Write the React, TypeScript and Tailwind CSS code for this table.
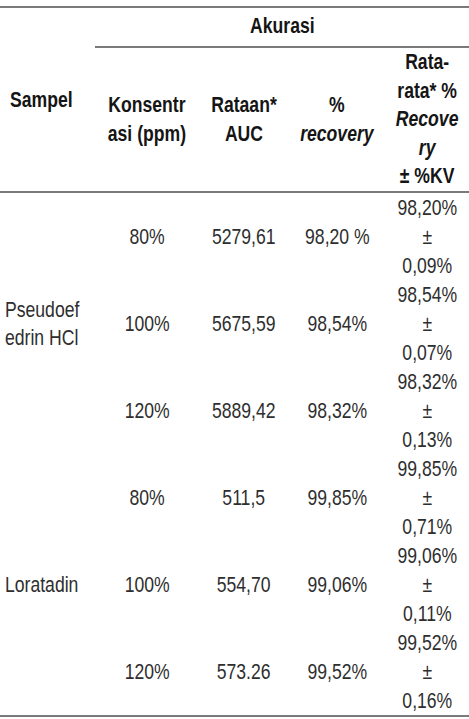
import React from "react";

const rows = [
  { c: "80%", a: "5279,61", r: "98,20 %", m: "98,20%", kv: "0,09%" },
  { c: "100%", a: "5675,59", r: "98,54%", m: "98,54%", kv: "0,07%" },
  { c: "120%", a: "5889,42", r: "98,32%", m: "98,32%", kv: "0,13%" },
  { c: "80%", a: "511,5", r: "99,85%", m: "99,85%", kv: "0,71%" },
  { c: "100%", a: "554,70", r: "99,06%", m: "99,06%", kv: "0,11%" },
  { c: "120%", a: "573.26", r: "99,52%", m: "99,52%", kv: "0,16%" },
];

const N = "inline-block scale-x-[0.8] whitespace-nowrap";

export default function App() {
  return (
    <div
      className="w-[469px] h-[719px] bg-white pt-[6px]"
      style={{ fontFamily: '"Liberation Sans", Arial, sans-serif' }}
    >
      <div className="grid grid-cols-[95px_104px_90px_96px_84px] grid-rows-[40px_145px_repeat(6,87px)] border-t-2 border-b-2 border-[#7a7a7a] text-[22px]">
        <div className="row-span-2 border-b-2 border-[#7a7a7a] flex items-center pl-[10px] font-bold text-[#151515]">
          <span className={N + " origin-left"}>Sampel</span>
        </div>
        <div className="col-span-4 border-b-2 border-[#7a7a7a] flex justify-center pt-[4px] leading-[28px] font-bold text-[#151515]">
          <span className={N}>Akurasi</span>
        </div>
        <div className="border-b-2 border-[#7a7a7a] flex items-center justify-center text-center leading-[28.6px] font-bold text-[#151515]">
          <span className={N}>
            Konsentr
            <br />
            asi (ppm)
          </span>
        </div>
        <div className="border-b-2 border-[#7a7a7a] flex items-center justify-center text-center leading-[28.6px] font-bold text-[#151515]">
          <span className={N}>
            Rataan*
            <br />
            AUC
          </span>
        </div>
        <div className="border-b-2 border-[#7a7a7a] flex items-center justify-center text-center leading-[28.6px] font-bold text-[#151515]">
          <span className={N}>
            %
            <br />
            <i>recovery</i>
          </span>
        </div>
        <div className="border-b-2 border-[#7a7a7a] flex items-center justify-center text-center leading-[28.6px] font-bold text-[#151515]">
          <span className={N}>
            Rata-
            <br />
            rata* %
            <br />
            <i>Recove</i>
            <br />
            <i>ry</i>
            <br />± %KV
          </span>
        </div>

        <div className="row-span-3 flex items-center pl-[5px] leading-[28px] text-[#2e2e2e]">
          <span className={N + " origin-left"}>
            Pseudoef
            <br />
            edrin HCl
          </span>
        </div>
        {rows.slice(0, 3).map((r, i) => (
          <Row key={i} r={r} />
        ))}
        <div className="row-span-3 flex items-center pl-[5px] leading-[28px] text-[#2e2e2e]">
          <span className={N + " origin-left"}>Loratadin</span>
        </div>
        {rows.slice(3).map((r, i) => (
          <Row key={i + 3} r={r} />
        ))}
      </div>
    </div>
  );
}

function Row({ r }: { r: { c: string; a: string; r: string; m: string; kv: string } }) {
  return (
    <>
      <div className="flex items-center justify-center text-[#2e2e2e]">
        <span className={N}>{r.c}</span>
      </div>
      <div className="flex items-center justify-center text-[#2e2e2e]">
        <span className={N}>{r.a}</span>
      </div>
      <div className="flex items-center justify-center text-[#2e2e2e]">
        <span className={N}>{r.r}</span>
      </div>
      <div className="flex items-center justify-center text-center leading-[29px] text-[#2e2e2e]">
        <span className={N}>
          {r.m}
          <br />±
          <br />
          {r.kv}
        </span>
      </div>
    </>
  );
}
